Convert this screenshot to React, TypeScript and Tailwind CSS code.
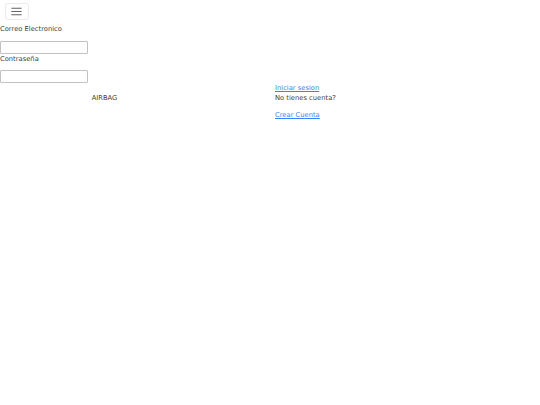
import React from "react";

const TogglerIcon = () => (
  <svg width="13" height="13" viewBox="0 0 30 30" xmlns="http://www.w3.org/2000/svg">
    <path d="M4 7.5h22M4 15h22M4 22.5h22" stroke="rgba(33,37,41,0.75)" strokeWidth="2.2" strokeLinecap="round" />
  </svg>
);

export default function App() {
  return (
    <div className="min-h-[405px] w-[540px] bg-white text-[#3d3f42] text-[6.75px] leading-[10px] font-['DejaVu_Sans',sans-serif]">
      {/* navbar */}
      <nav className="flex px-[5px] py-[3.4px]">
        <button className="flex items-center justify-center w-[23.5px] h-[17px] rounded-[2.5px] border border-[rgba(0,0,0,0.08)]">
          <TogglerIcon />
        </button>
      </nav>

      {/* login form */}
      <form className="flex flex-col">
        <label className="block mb-[6.75px]">Correo Electronico</label>
        <input type="email" className="w-[88px] h-[13px] border border-[#c2c2c2] rounded-[1px] outline-none" />
        <label className="block mb-[6.75px]">Contraseña</label>
        <input type="password" className="w-[88px] h-[13px] border border-[#c2c2c2] rounded-[1px] outline-none" />
      </form>

      {/* bottom row */}
      <div className="flex">
        <div className="w-[275px] flex">
          <div className="w-[209px] pt-[10px] text-center">AIRBAG</div>
        </div>
        <div className="flex flex-col items-start">
          <a href="#" className="text-[#3b82f6] underline">Iniciar sesion</a>
          <p className="mb-[6.75px]">No tienes cuenta?</p>
          <a href="#" className="text-[#3b82f6] underline">Crear Cuenta</a>
        </div>
      </div>
    </div>
  );
}
